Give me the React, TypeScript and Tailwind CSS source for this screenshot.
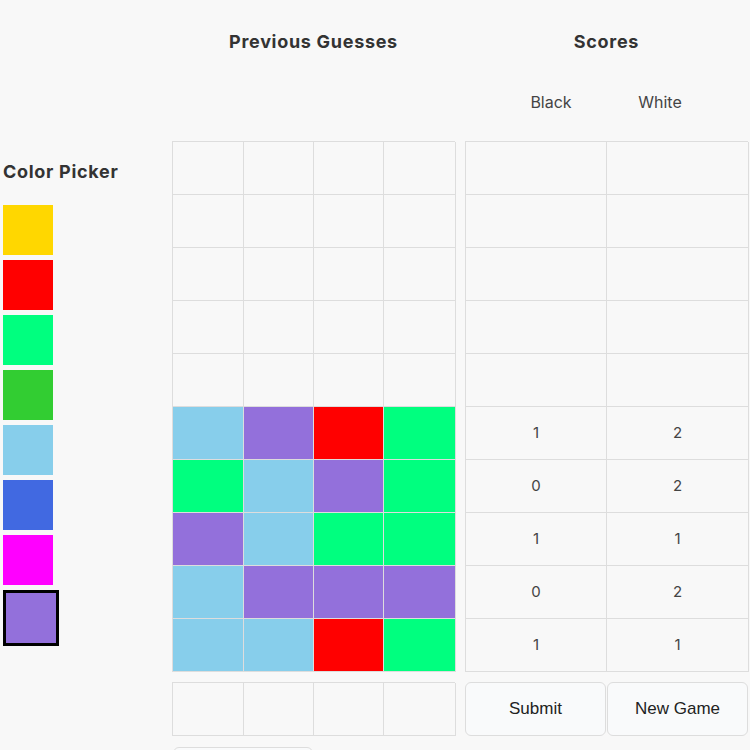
const palette = ["#FFD700", "#FF0000", "#00FF7F", "#32CD32", "#87CEEB", "#4169E1", "#FF00FF", "#9370DB"];

const S = "#87CEEB";
const P = "#9370DB";
const R = "#FF0000";
const G = "#00FF7F";

const guesses: (string | null)[][] = [
  [null, null, null, null],
  [null, null, null, null],
  [null, null, null, null],
  [null, null, null, null],
  [null, null, null, null],
  [S, P, R, G],
  [G, S, P, G],
  [P, S, G, G],
  [S, P, P, P],
  [S, S, R, G],
];

const scores: ([number, number] | null)[] = [null, null, null, null, null, [1, 2], [0, 2], [1, 1], [0, 2], [1, 1]];

const heading = "text-[18px] leading-[27px] font-bold text-[#333333] tracking-[0.7px]";

export default function App() {
  const selected = 7;
  return (
    <div className="min-h-screen bg-[#f8f8f8] flex font-['Inter',sans-serif] text-[#333333]">
      {/* Color picker */}
      <div className="w-[172px] shrink-0 pl-[3px] pt-[158px]">
        <h2 className={heading}>Color Picker</h2>
        <div className="mt-[20px] flex flex-col gap-[5px]">
          {palette.map((c, i) => (
            <div
              key={c}
              className={i === selected ? "w-[56px] h-[56px] border-[3px] border-black" : "w-[50px] h-[50px]"}
              style={{ backgroundColor: c }}
            />
          ))}
        </div>
      </div>

      {/* Previous guesses */}
      <div className="w-[283px] shrink-0 pt-[28px]">
        <h2 className={heading + " text-center"}>Previous Guesses</h2>
        <div className="h-[86px]" />
        <div className="grid grid-cols-[71px_70px_70px_72px] border-l border-t border-[#dddddd]">
          {guesses.flat().map((c, i) => (
            <div
              key={i}
              className="h-[53px] border-r border-b border-[#dddddd]"
              style={c ? { backgroundColor: c } : undefined}
            />
          ))}
        </div>
        <div className="mt-[10px] grid grid-cols-[71px_70px_70px_72px] border-l border-t border-[#dddddd]">
          {[0, 1, 2, 3].map((i) => (
            <div key={i} className="h-[53px] border-r border-b border-[#dddddd]" />
          ))}
        </div>
        <button className="mt-[11px] ml-[1px] w-[140px] h-[40px] rounded-[6px] border border-[#dddddd] bg-[#f9fafb]" />
      </div>

      {/* Scores */}
      <div className="w-[283px] shrink-0 ml-[10px] pt-[28px]">
        <h2 className={heading + " text-center"}>Scores</h2>
        <div className="mt-[35px] h-[24px] flex pl-[16px] text-[16px] leading-[24px] text-[#444444]">
          <div className="w-[140px] text-center">Black</div>
          <div className="w-[78px] text-center">White</div>
        </div>
        <div className="mt-[27px] grid grid-cols-[141px_142px] border-l border-t border-[#dddddd]">
          {scores.map((s, i) => (
            <>
              <div key={"b" + i} className="h-[53px] border-r border-b border-[#dddddd] flex items-center justify-center text-[15px] text-[#444444]">
                {s ? s[0] : ""}
              </div>
              <div key={"w" + i} className="h-[53px] border-r border-b border-[#dddddd] flex items-center justify-center text-[15px] text-[#444444]">
                {s ? s[1] : ""}
              </div>
            </>
          ))}
        </div>
        <div className="mt-[10px] flex gap-[1px]">
          <button className="w-[141px] h-[54px] rounded-[6px] border border-[#dddddd] bg-[#f9fafb] font-['Liberation_Sans',Arial,sans-serif] text-[17px] text-[#222222]">
            Submit
          </button>
          <button className="w-[141px] h-[54px] rounded-[6px] border border-[#dddddd] bg-[#f9fafb] font-['Liberation_Sans',Arial,sans-serif] text-[17px] text-[#222222]">
            New Game
          </button>
        </div>
      </div>
    </div>
  );
}
